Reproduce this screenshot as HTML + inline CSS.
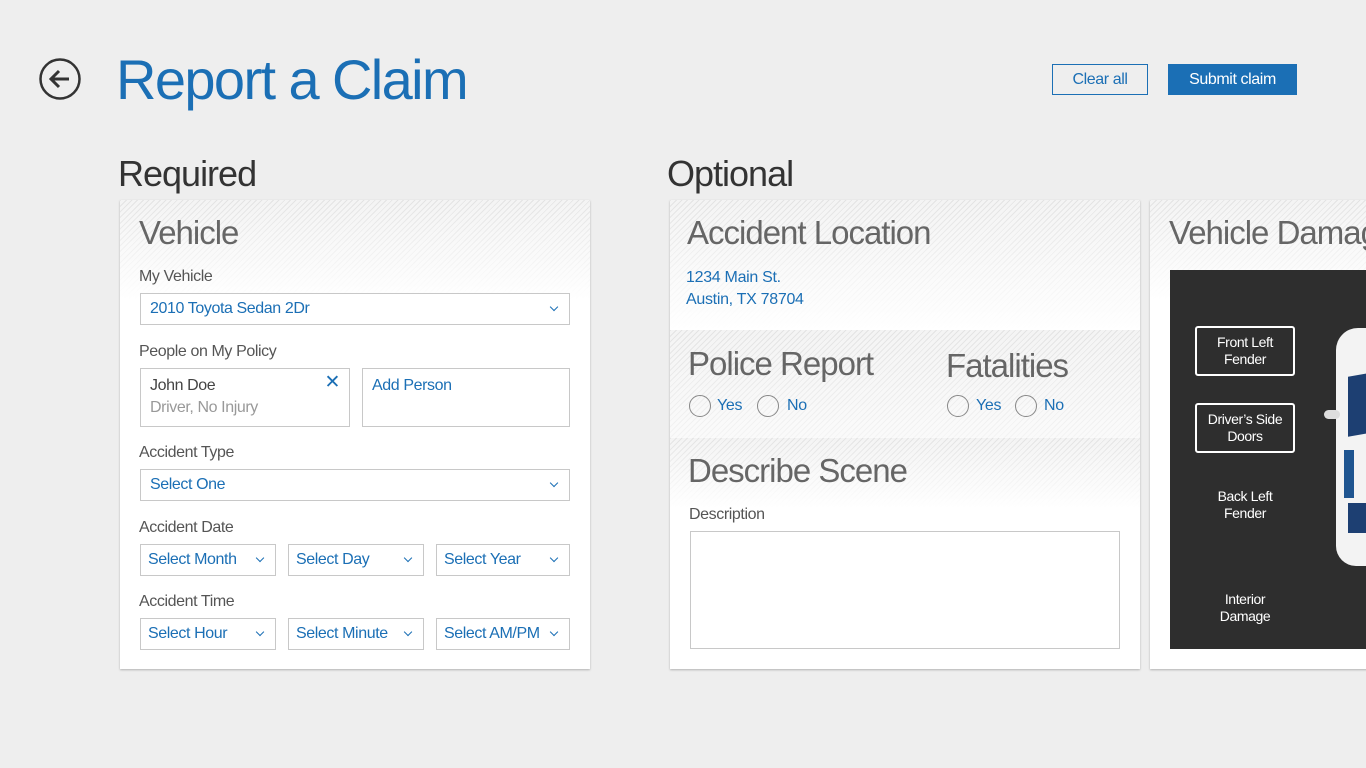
<!DOCTYPE html>
<html><head><style>
body{margin:0;width:1366px;height:768px;background:#eeeeee;font-family:"Liberation Sans",sans-serif;position:relative;overflow:hidden;color:#444}
.a{position:absolute}
.blue{color:#1b6fb5}
.card{position:absolute;background:#fff;box-shadow:0 1px 2px rgba(0,0,0,.25);overflow:hidden}
.hatch{position:absolute;left:0;right:0;background:repeating-linear-gradient(135deg,#e3e3e3 0 1px,#f4f4f4 1px 4px)}
.fade{position:absolute;left:0;right:0;background:linear-gradient(rgba(255,255,255,0),#fff)}
.h{position:absolute;font-size:33px;color:#666;letter-spacing:-1px}
.lbl{position:absolute;font-size:16px;color:#555;letter-spacing:-.4px}
.box{position:absolute;border:1px solid #c8c8c8;background:#fff;box-sizing:border-box;font-size:16px;color:#1b6fb5;padding-left:9px;line-height:30px;letter-spacing:-.4px}
.box.s::after{content:"";position:absolute;right:12px;top:10px;width:5px;height:5px;border-right:1.5px solid #1b6fb5;border-bottom:1.5px solid #1b6fb5;transform:rotate(45deg)}
.rad{position:absolute;width:22px;height:22px;border:1.5px solid #888;border-radius:50%;box-sizing:border-box}
.rt{position:absolute;font-size:16px;color:#1b6fb5;letter-spacing:-.3px}
.tag{position:absolute;color:#fff;font-size:14px;text-align:center;line-height:17px;width:100px;box-sizing:border-box;letter-spacing:-.4px}
</style></head><body>
<svg class="a" style="left:38px;top:57px" width="44" height="44" viewBox="0 0 44 44"><circle cx="22" cy="22" r="19.5" fill="none" stroke="#333" stroke-width="2.5"/><path d="M31 22H13M21 14l-8 8 8 8" fill="none" stroke="#333" stroke-width="3"/></svg>
<div class="a blue" style="left:116px;top:47px;font-size:56px;letter-spacing:-1.6px">Report a Claim</div>
<div class="a blue" style="left:1052px;top:64px;width:96px;height:31px;border:1px solid #1b6fb5;box-sizing:border-box;text-align:center;line-height:29px;font-size:16px;letter-spacing:-.4px">Clear all</div>
<div class="a" style="left:1168px;top:64px;width:129px;height:31px;background:#1b6fb5;color:#fff;text-align:center;line-height:31px;font-size:16px;letter-spacing:-.4px">Submit claim</div>
<div class="a" style="left:118px;top:153px;font-size:36px;color:#333;letter-spacing:-1px">Required</div>
<div class="a" style="left:667px;top:153px;font-size:36px;color:#333;letter-spacing:-1px">Optional</div>

<div class="card" style="left:120px;top:200px;width:470px;height:469px">
<div class="hatch" style="top:0;height:100px"></div><div class="fade" style="top:0;height:100px"></div>
<div class="h" style="left:19px;top:14px">Vehicle</div>
<div class="lbl" style="left:19px;top:68px">My Vehicle</div>
<div class="box s" style="left:20px;top:93px;width:430px;height:32px">2010 Toyota Sedan 2Dr</div>
<div class="lbl" style="left:19px;top:143px">People on My Policy</div>
<div class="box" style="left:20px;top:168px;width:210px;height:59px;color:#444;line-height:22px;padding-top:6px">John Doe<br><span style="color:#999">Driver, No Injury</span><span class="blue" style="position:absolute;right:9px;top:3px;font-size:19px">✕</span></div>
<div class="box" style="left:242px;top:168px;width:208px;height:59px;line-height:22px;padding-top:6px">Add Person</div>
<div class="lbl" style="left:19px;top:244px">Accident Type</div>
<div class="box s" style="left:20px;top:269px;width:430px;height:32px">Select One</div>
<div class="lbl" style="left:19px;top:319px">Accident Date</div>
<div class="box s" style="left:20px;top:344px;width:136px;height:32px;padding-left:7px">Select Month</div>
<div class="box s" style="left:168px;top:344px;width:136px;height:32px;padding-left:7px">Select Day</div>
<div class="box s" style="left:316px;top:344px;width:134px;height:32px;padding-left:7px">Select Year</div>
<div class="lbl" style="left:19px;top:393px">Accident Time</div>
<div class="box s" style="left:20px;top:418px;width:136px;height:32px;padding-left:7px">Select Hour</div>
<div class="box s" style="left:168px;top:418px;width:136px;height:32px;padding-left:7px">Select Minute</div>
<div class="box s" style="left:316px;top:418px;width:134px;height:32px;padding-left:7px">Select AM/PM</div>
</div>

<div class="card" style="left:670px;top:200px;width:470px;height:469px">
<div class="hatch" style="top:0;height:130px"></div><div class="fade" style="top:0;height:130px"></div>
<div class="h" style="left:17px;top:14px">Accident Location</div>
<div class="rt" style="left:16px;top:67px;line-height:22px">1234 Main St.<br>Austin, TX 78704</div>
<div class="hatch" style="top:130px;height:108px"></div><div class="fade" style="top:130px;height:108px;background:linear-gradient(rgba(255,255,255,0),rgba(255,255,255,.6))"></div>
<div class="h" style="left:18px;top:145px">Police Report</div>
<div class="rad" style="left:19px;top:195px"></div><div class="rt" style="left:47px;top:197px">Yes</div>
<div class="rad" style="left:87px;top:195px"></div><div class="rt" style="left:117px;top:197px">No</div>
<div class="h" style="left:276px;top:147px">Fatalities</div>
<div class="rad" style="left:277px;top:195px"></div><div class="rt" style="left:306px;top:197px">Yes</div>
<div class="rad" style="left:345px;top:195px"></div><div class="rt" style="left:374px;top:197px">No</div>
<div class="hatch" style="top:238px;height:70px"></div><div class="fade" style="top:238px;height:70px"></div>
<div class="h" style="left:18px;top:252px">Describe Scene</div>
<div class="lbl" style="left:19px;top:306px">Description</div>
<div class="box" style="left:20px;top:331px;width:430px;height:118px"></div>
</div>

<div class="card" style="left:1150px;top:200px;width:230px;height:469px">
<div class="hatch" style="top:0;height:100px"></div><div class="fade" style="top:0;height:100px"></div>
<div class="h" style="left:19px;top:14px;white-space:nowrap">Vehicle Damage</div>
<div class="a" style="left:20px;top:70px;width:210px;height:379px;background:#2e2e2e">
<div class="tag" style="left:25px;top:56px;height:50px;border:2px solid #fff;border-radius:3px;padding-top:6px">Front Left<br>Fender</div>
<div class="tag" style="left:25px;top:133px;height:50px;border:2px solid #fff;border-radius:3px;padding-top:6px">Driver’s Side<br>Doors</div>
<div class="tag" style="left:25px;top:218px">Back Left<br>Fender</div>
<div class="tag" style="left:25px;top:321px">Interior<br>Damage</div>
<div class="a" style="left:166px;top:58px;width:60px;height:238px;background:#f3f3f3;border-radius:22px 0 0 20px"></div>
<div class="a" style="left:178px;top:105px;width:20px;height:60px;background:#1d3f72;transform:skewY(-10deg)"></div>
<div class="a" style="left:174px;top:180px;width:10px;height:48px;background:#1f5590"></div>
<div class="a" style="left:178px;top:233px;width:20px;height:30px;background:#1d3f72"></div>
<div class="a" style="left:154px;top:140px;width:16px;height:9px;background:#ddd;border-radius:5px"></div>
</div>
</div>
</body></html>
